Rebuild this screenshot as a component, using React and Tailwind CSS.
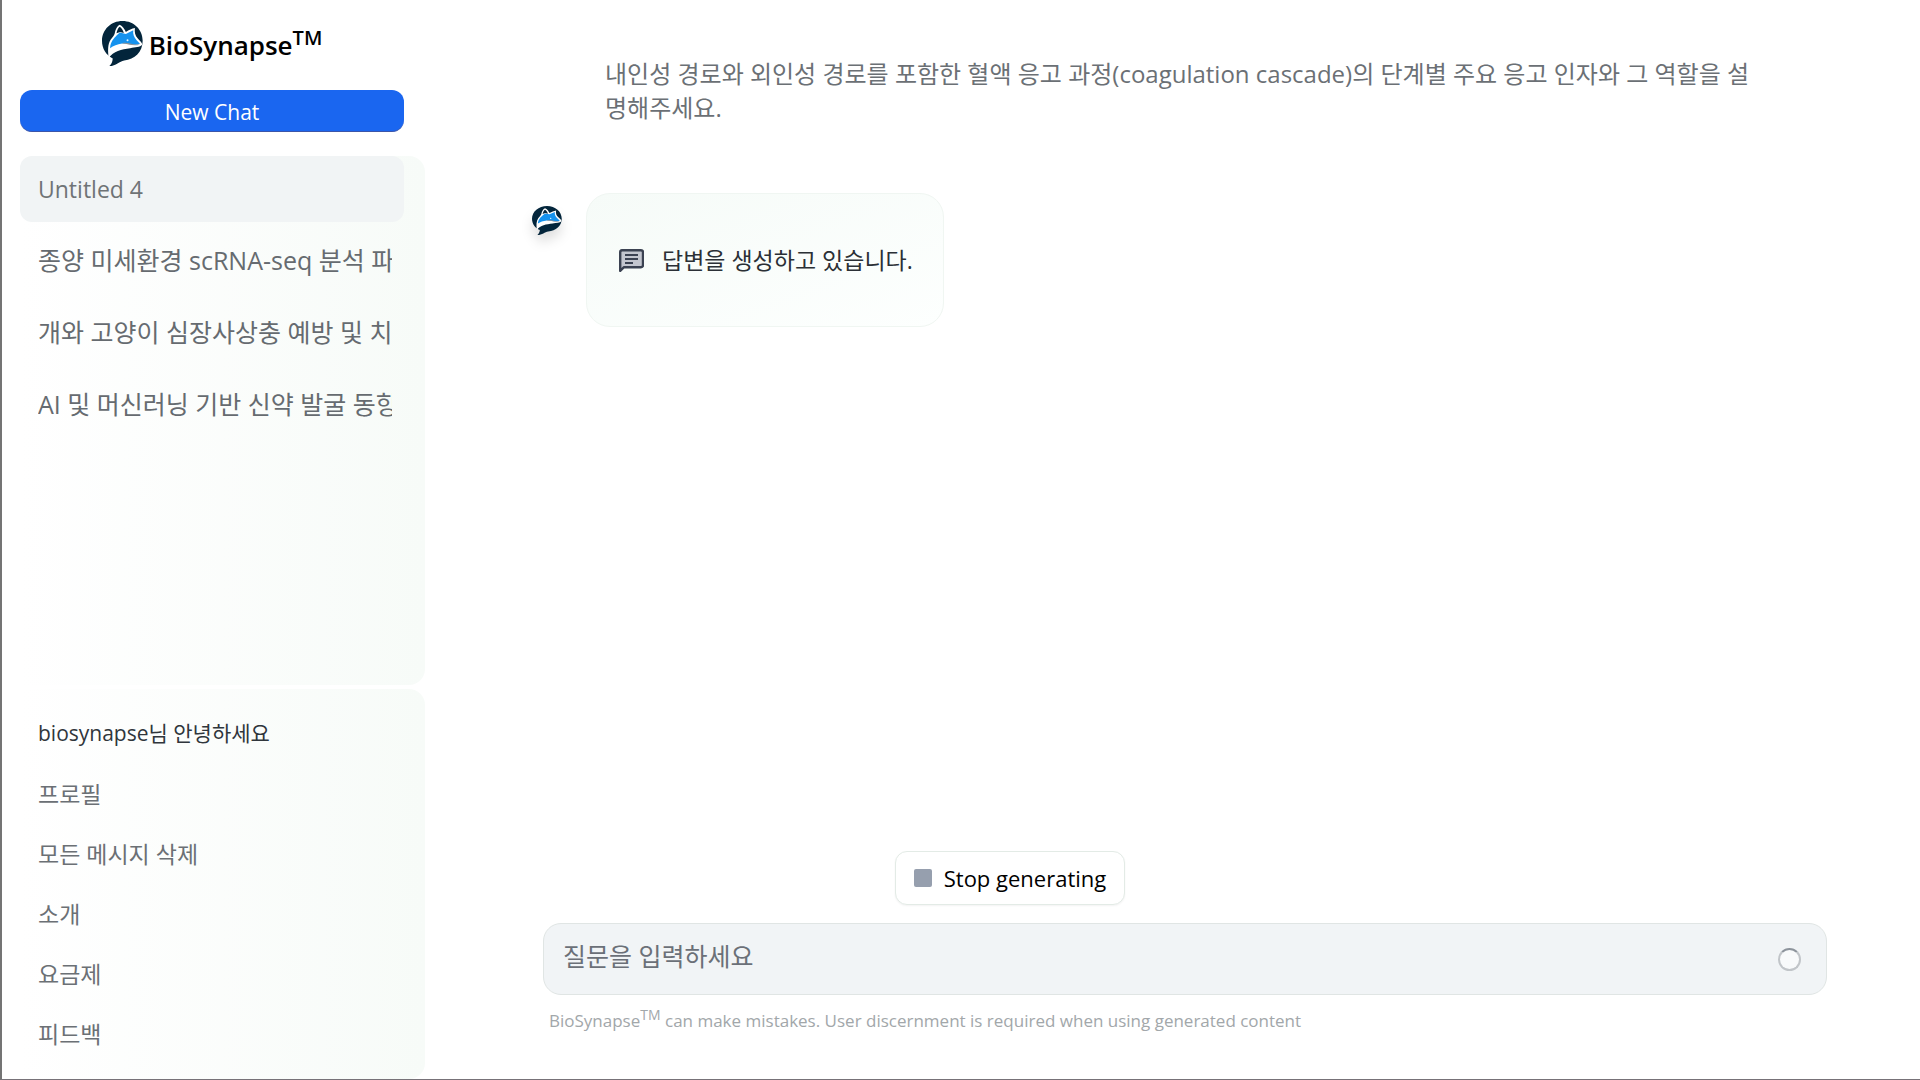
const chats = [
  "Untitled 4",
  "종양 미세환경 scRNA-seq 분석 파이프라인",
  "개와 고양이 심장사상충 예방 및 치료",
  "AI 및 머신러닝 기반 신약 발굴 동향",
];

const links = ["프로필", "모든 메시지 삭제", "소개", "요금제", "피드백"];

function Logo({ className }) {
  return (
    <svg viewBox="0 0 122 136" className={className} aria-hidden="true" preserveAspectRatio="none">
      <path
        d="M61 0C95 0 121 26 121 60C121 94 97 117 66 119C52 121 42 136 22 136C28 130 31 124 32 113C12 103 0 84 0 60C0 26 27 0 61 0Z"
        fill="#03253b"
      />
      <path
        d="M20 112C17 88 17 70 26 56C31 49 36 44 38 37C40 26 45 14 53 11C61 15 67 23 71 33C80 27 89 23 98 21C96 34 99 44 106 52C112 59 119 64 120 72C113 79 99 80 84 82C58 85 34 91 20 112Z"
        fill="#fff"
      />
      <path
        d="M24 82C25 62 36 52 44 43L53 35L71 39L93 28C91 40 96 50 103 58L113 69C96 77 78 66 60 68C45 70 34 75 24 82Z"
        fill="#1592ee"
      />
      <path d="M43 37C45 27 49 19 53 17C59 22 63 28 65 36L54 33Z" fill="#03253b" />
      <path d="M60 67C76 62 90 74 113 70C96 79 78 68 60 68Z" fill="#8d9297" />
      <circle cx="76" cy="58" r="3" fill="#e5f5ff" />
    </svg>
  );
}

function MessageIcon() {
  return (
    <svg viewBox="0 0 25 23" className="w-[25px] h-[23px] shrink-0" aria-hidden="true">
      <path d="M3 1.2h19a2 2 0 0 1 2 2v13a2 2 0 0 1-2 2H5l-3.8 3.6V3.2a2 2 0 0 1 1.8-2Z" fill="#c3c6cf" stroke="#3b4252" strokeWidth="2.4" strokeLinejoin="round" />
      <path d="M6 6h13M6 10h13M6 14h8" stroke="#3b4252" strokeWidth="2.2" />
    </svg>
  );
}

function Sidebar() {
  return (
    <aside className="flex w-[423px] shrink-0 flex-col">
      <div className="mx-[18px] flex h-[90px] w-[384px] items-center justify-center gap-1.5 pb-1">
        <Logo className="h-[45px] w-[41px]" />
        <h1 className="pt-1 text-[26px] font-semibold text-black">
          BioSynapse<sup className="text-[20px]">TM</sup>
        </h1>
      </div>
      <button className="mx-[18px] h-[42px] w-[384px] rounded-xl border-b border-[#3c55a8] bg-[#1a66f0] pt-1 text-[21px] text-white">
        New Chat
      </button>

      <nav className="mt-6 ml-[18px] flex flex-1 flex-col gap-1.5 rounded-r-2xl bg-linear-to-r from-white to-[#f7fbf8]">
        {chats.map((title, i) => (
          <a
            key={title}
            href="#"
            className={
              i === 0
                ? "flex h-[66px] w-[384px] items-center rounded-xl bg-[#f1f4f5] px-[18px] text-[23px] text-[#6f7376]"
                : "flex h-[66px] w-[384px] items-center rounded-xl pr-3 pl-[18px] text-[25px] text-[#666b70]"
            }
          >
            <span className="min-w-0 flex-1 overflow-hidden whitespace-nowrap">{title}</span>
          </a>
        ))}
      </nav>

      <div className="mt-1 ml-[18px] flex flex-col rounded-r-2xl bg-linear-to-r from-white to-[#f7fbf8] py-[15px] pl-[18px] text-[23px] text-[#6b7075]">
        <p className="flex h-[60px] items-center text-[21px] text-[#30363c]">biosynapse님 안녕하세요</p>
        {links.map((label) => (
          <a key={label} href="#" className="flex h-[60px] items-center">
            {label}
          </a>
        ))}
      </div>
    </aside>
  );
}

function Messages() {
  return (
    <section className="flex-1 pt-[57px] pr-[160px] pl-[107px]">
      <p className="pl-[73px] text-[24px] leading-[34px] break-all text-[#6b7075]">
        내인성 경로와 외인성 경로를 포함한 혈액 응고 과정(coagulation cascade)의 단계별 주요 응고 인자와 그 역할을 설명해주세요.
      </p>
      <div className="mt-[68px] flex items-start gap-6">
        <Logo className="mt-[13px] h-[29px] w-[30px] drop-shadow-[0_8px_6px_rgba(0,0,0,0.12)]" />
        <div className="flex h-[134px] items-center gap-[18px] rounded-3xl border border-[#f0f6f2] bg-linear-to-br from-[#f6fbf8] to-[#fdfffe] pr-[30px] pl-8 text-[23px] text-[#2b3036]">
          <MessageIcon />
          답변을 생성하고 있습니다.
        </div>
      </div>
    </section>
  );
}

function Composer() {
  return (
    <footer className="flex flex-col pr-[93px] pb-[42px] pl-[118px]">
      <div className="flex justify-center pr-[350px]">
        <button className="flex h-[54px] items-center gap-3 rounded-xl border border-[#e3ebe6] bg-white px-[18px] text-[22px] text-black shadow-xs">
          <span className="size-[18px] rounded-xs bg-[#969fae]" />
          Stop generating
        </button>
      </div>
      <div className="mt-[18px] flex h-[72px] items-center rounded-[18px] border border-[#e0e5e4] bg-[#f1f4f6] pr-[25px] pl-[19px]">
        <input
          aria-label="질문"
          placeholder="질문을 입력하세요"
          className="min-w-0 flex-1 bg-transparent pb-1 text-[25px] outline-none placeholder:text-[#6b7078]"
        />
        <span className="size-[23px] rounded-full border-2 border-[#c1c5c9] border-t-[#8d949c] bg-white/50" />
      </div>
      <p className="mt-2.5 pl-1.5 text-[17px] leading-8 text-[#a2a7aa]">
        BioSynapse<sup className="text-[14px]">TM</sup> can make mistakes. User discernment is required when using generated content
      </p>
    </footer>
  );
}

export default function App() {
  return (
    <div className="flex min-h-screen border-b border-l-2 border-b-[#777278] border-l-[#747474] bg-white font-['Open_Sans','Noto_Sans_CJK_KR',sans-serif]">
      <Sidebar />
      <main className="flex min-w-0 flex-1 flex-col">
        <Messages />
        <Composer />
      </main>
    </div>
  );
}
